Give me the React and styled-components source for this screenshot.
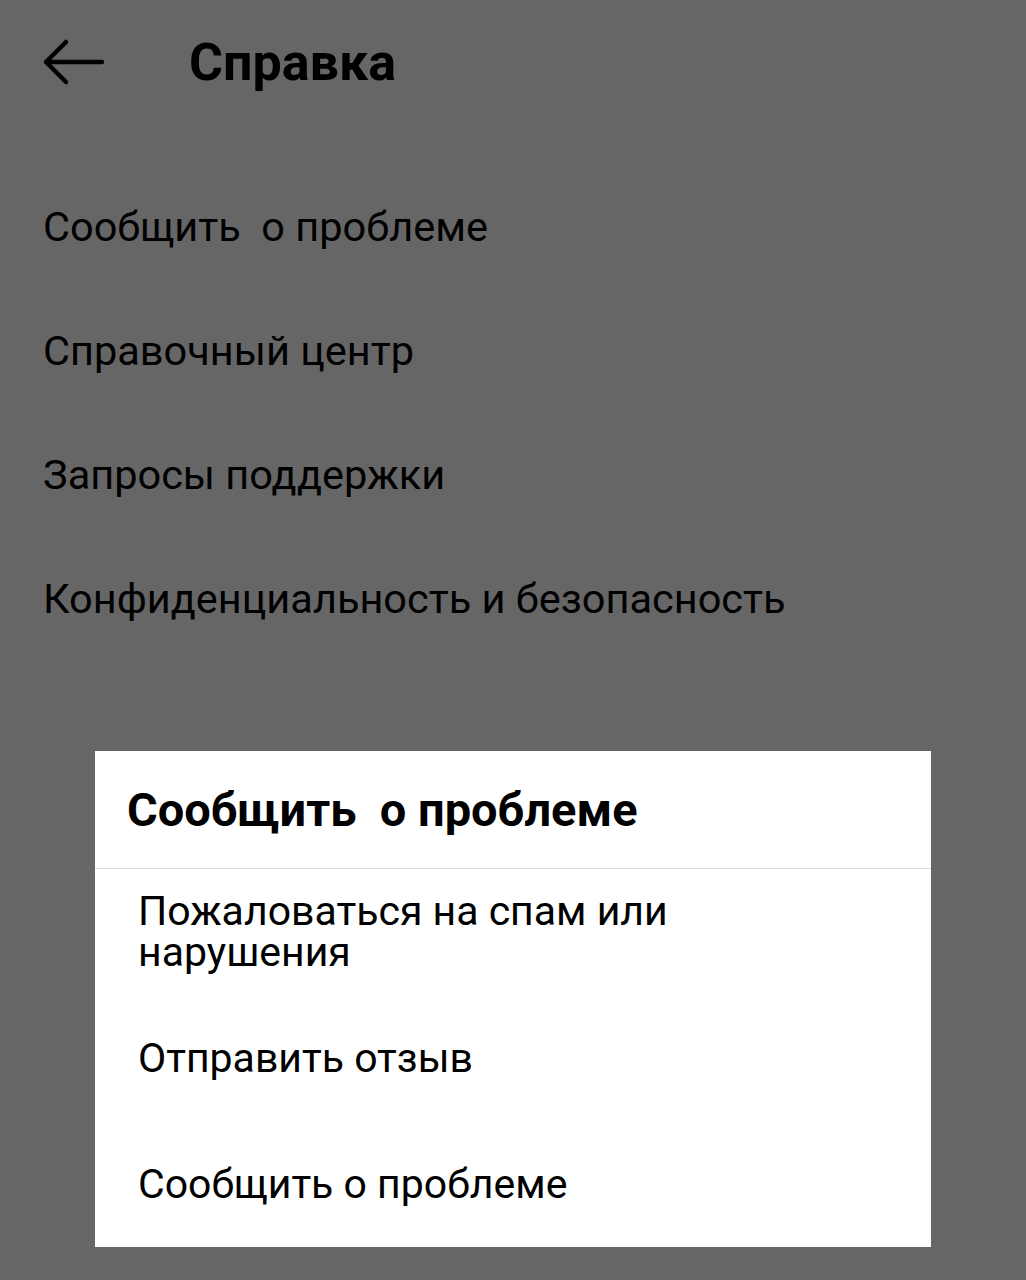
import React from 'react'
import styled, { createGlobalStyle } from 'styled-components'

const GlobalStyle = createGlobalStyle`
  html, body {
    margin: 0;
    padding: 0;
    background: #ffffff;
  }
  body {
    font-family: Roboto, "Noto Sans", "Liberation Sans", sans-serif;
    color: #000;
  }
`

const menuItems = [
  'Сообщить  о проблеме',
  'Справочный центр',
  'Запросы поддержки',
  'Конфиденциальность и безопасность',
]

function BackArrow() {
  return (
    <svg width="64" height="48" viewBox="0 0 64 48" fill="none">
      <path
        d="M60 24H4M24 4L4 24l20 20"
        stroke="#000"
        strokeWidth="4.5"
        strokeLinecap="round"
        strokeLinejoin="round"
      />
    </svg>
  )
}

function App() {
  return (
    <Page>
      <GlobalStyle />
      <Header>
        <BackButton>
          <BackArrow />
        </BackButton>
        <Title>Справка</Title>
      </Header>

      <Menu>
        {menuItems.map(item => (
          <MenuItem key={item}>{item}</MenuItem>
        ))}
      </Menu>

      <Scrim>
        <Dialog>
          <DialogTitle>Сообщить  о проблеме</DialogTitle>
          <Option>
            Пожаловаться на спам или
            <br />
            нарушения
          </Option>
          <Option>Отправить отзыв</Option>
          <Option>Сообщить о проблеме</Option>
        </Dialog>
      </Scrim>
    </Page>
  )
}

export default App

const Page = styled.div`
  width: 1026px;
  height: 1280px;
  background: #ffffff;
  overflow: hidden;
`

const Header = styled.div`
  display: flex;
  align-items: center;
  height: 124px;
  padding-left: 42px;
  gap: 83px;
`

const BackButton = styled.div`
  display: flex;
  width: 64px;
  height: 48px;
`

const Title = styled.h1`
  margin: 0;
  font-size: 52px;
  font-weight: 700;
`

const Menu = styled.div`
  padding-top: 40px;
`

const MenuItem = styled.div`
  display: flex;
  align-items: center;
  height: 124px;
  padding-left: 43px;
  font-size: 41.5px;
  white-space: pre;
`

const Scrim = styled.div`
  position: fixed;
  inset: 0;
  background: rgba(0, 0, 0, 0.6);
  display: flex;
  justify-content: center;
  align-items: flex-start;
  padding-top: 751px;
`

const Dialog = styled.div`
  width: 836px;
  background: #ffffff;
`

const DialogTitle = styled.div`
  box-sizing: border-box;
  display: flex;
  align-items: center;
  height: 118px;
  padding-left: 32px;
  border-bottom: 1px solid #dcdcdc;
  font-size: 47px;
  font-weight: 700;
  white-space: pre;
`

const Option = styled.div`
  display: flex;
  flex-direction: column;
  justify-content: center;
  min-height: 126px;
  padding-left: 43px;
  font-size: 41px;
  line-height: 41px;
`
